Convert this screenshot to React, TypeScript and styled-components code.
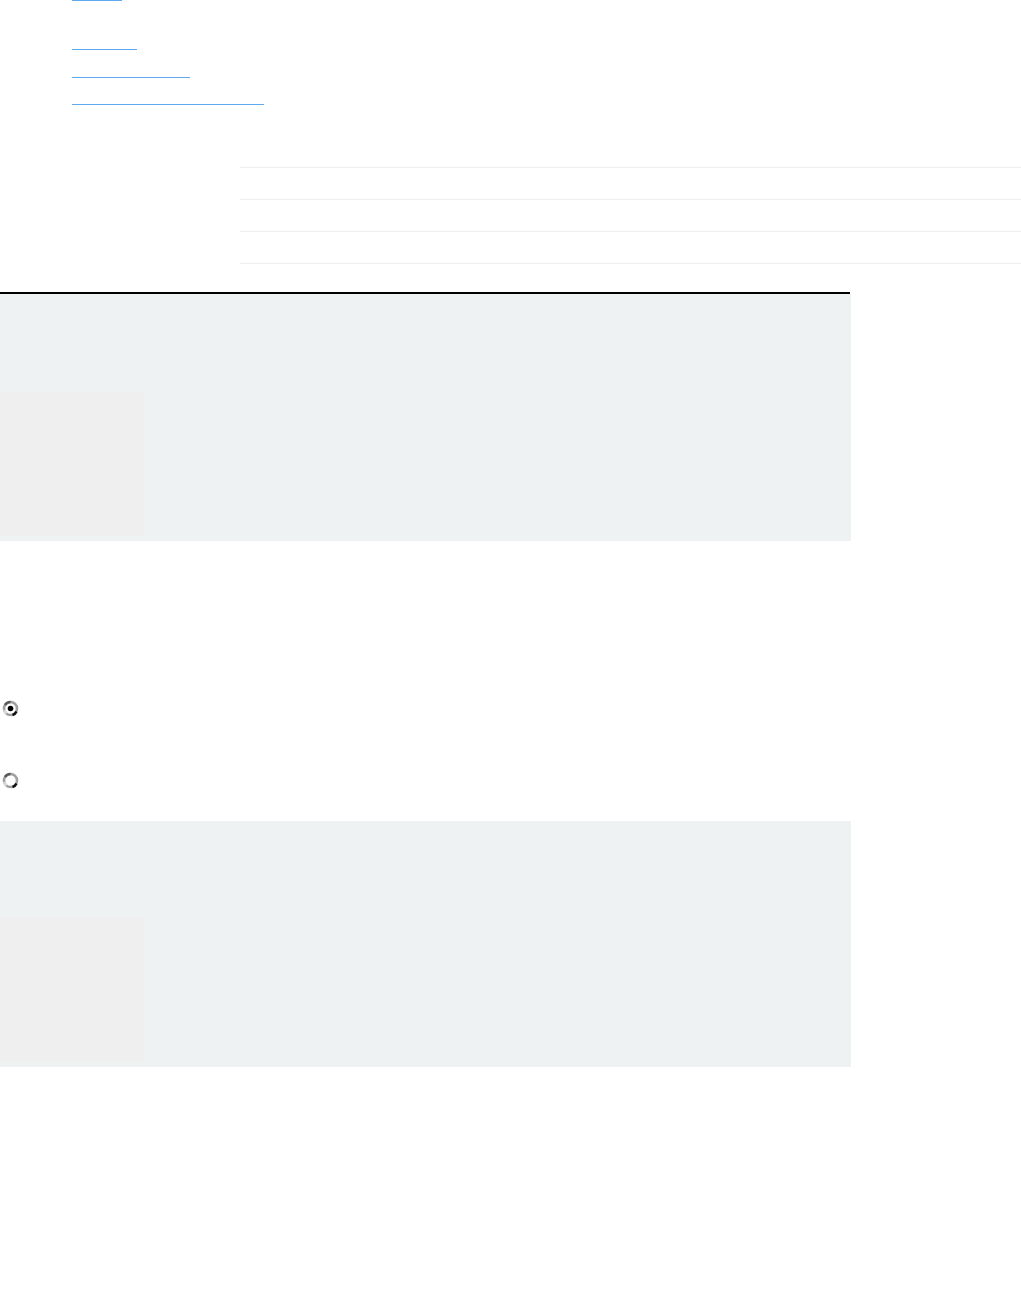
import React from "react";
import styled, { createGlobalStyle } from "styled-components";

const Global = createGlobalStyle`
  html, body { margin: 0; padding: 0; background: #ffffff; }
  body { font-family: "Liberation Sans", Arial, sans-serif; }
`;

const Page = styled.div`
  width: 1021px;
  height: 1304px;
  display: flex;
  flex-direction: column;
  overflow: hidden;
`;

const NavList = styled.ul`
  list-style: none;
  margin: 0;
  padding: 0 0 0 72px;
  display: flex;
  flex-direction: column;
`;

const NavItem = styled.li<{ $gap: number }>`
  margin-top: ${(p) => p.$gap}px;
  display: flex;
`;

const NavLink = styled.a<{ $w: number }>`
  display: block;
  width: ${(p) => p.$w}px;
  height: 0;
  border-bottom: 1px solid #5ea8f0;
  text-decoration: none;
`;

const Table = styled.div`
  margin: 62px 0 0 240px;
  display: flex;
  flex-direction: column;
  border-bottom: 1px solid #eeeeee;
`;

const Row = styled.div`
  height: 31px;
  border-top: 1px solid #eeeeee;
`;

const Rule = styled.div`
  margin-top: 28px;
  width: 850px;
  height: 2px;
  background: #000000;
`;

const Panel = styled.section<{ $top: number; $pad: number; $h: number }>`
  margin-top: ${(p) => p.$top}px;
  width: 851px;
  height: ${(p) => p.$h}px;
  box-sizing: border-box;
  padding-top: ${(p) => p.$pad}px;
  background: #eef2f3;
  display: flex;
  align-items: flex-start;
`;

const Thumb = styled.div`
  width: 144px;
  height: 144px;
  background: #efefef;
`;

const RadioGroup = styled.div`
  margin-top: 159px;
  padding-left: 2px;
  display: flex;
  flex-direction: column;
  gap: 55px;
`;

const RadioRow = styled.label`
  display: flex;
  align-items: center;
  height: 17px;
`;

const Radio = ({ checked }: { checked?: boolean }) => (
  <svg width="17" height="17" viewBox="0 0 17 17">
    <circle cx="8.5" cy="8.5" r="6.5" fill="#ffffff" stroke="#a0a0a0" strokeWidth="2.6" />
    <path d="M3 5 A6.5 6.5 0 0 1 8.5 2" stroke="#5a5a5a" strokeWidth="2.6" fill="none" />
    <path d="M2.2 10 A6.5 6.5 0 0 0 4.5 13.5" stroke="#d8d8d8" strokeWidth="2.6" fill="none" />
    <path d="M10.5 15 A6.5 6.5 0 0 0 14.5 11.5" stroke="#111" strokeWidth="2.6" fill="none" />
    {checked && <circle cx="8.5" cy="8.5" r="2.8" fill="#000" />}
  </svg>
);

export default function App() {
  const links = [
    { w: 50, gap: 0 },
    { w: 65, gap: 48 },
    { w: 118, gap: 27 },
    { w: 192, gap: 26 },
  ];
  return (
    <>
      <Global />
      <Page>
        <NavList>
          {links.map((l, i) => (
            <NavItem key={i} $gap={l.gap}>
              <NavLink href="#" aria-label={`link ${i + 1}`} $w={l.w} />
            </NavItem>
          ))}
        </NavList>
        <Table>
          <Row />
          <Row />
          <Row />
        </Table>
        <Rule />
        <Panel $top={0} $pad={98} $h={247}>
          <Thumb />
        </Panel>
        <RadioGroup>
          <RadioRow>
            <Radio checked />
          </RadioRow>
          <RadioRow>
            <Radio />
          </RadioRow>
        </RadioGroup>
        <Panel $top={32} $pad={97} $h={246}>
          <Thumb />
        </Panel>
      </Page>
    </>
  );
}
